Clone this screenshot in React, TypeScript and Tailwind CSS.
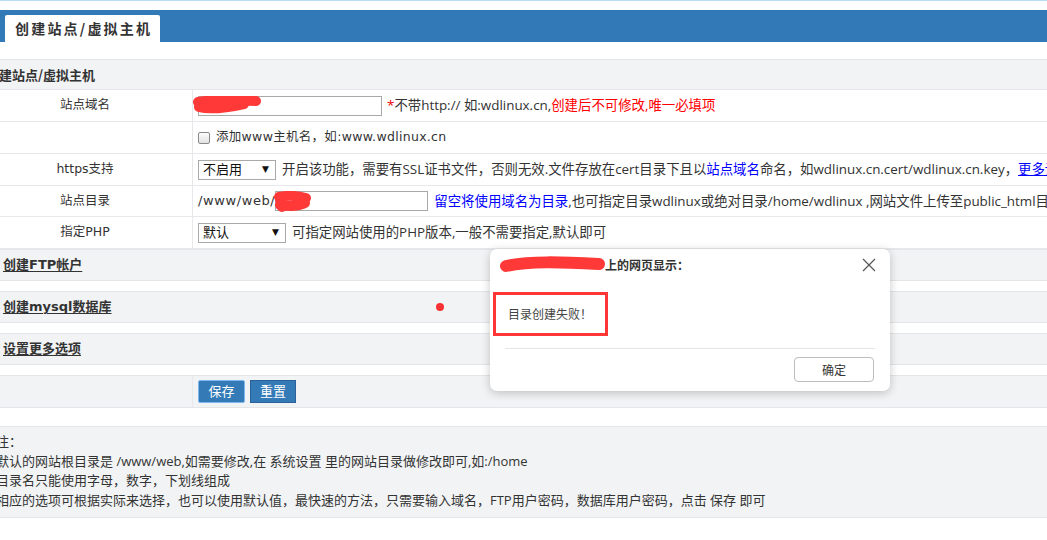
import React from 'react';

const formFont = "font-['DejaVu_Sans','Noto_Sans_CJK_SC',sans-serif]";
const descFont = "font-['Open_Sans','Noto_Sans_CJK_SC',sans-serif]";

// red brush marks that hide the real domain
function Scribble({ w, h, paths, sw }: { w: number; h: number; paths: string[]; sw: number }) {
  return (
    <svg width={w} height={h} viewBox={`0 0 ${w} ${h}`} className="block">
      {paths.map((d, i) => (
        <path key={i} d={d} fill="none" stroke="#ff3838" strokeWidth={sw} strokeLinecap="round" strokeLinejoin="round" />
      ))}
    </svg>
  );
}

function FakeSelect({ width, value }: { width: string; value: string }) {
  return (
    <div className={`${width} h-[20px] border border-[#a9a9a9] bg-white flex items-center justify-between pl-[4px] pr-[6px] text-[13px] text-[#111]`}>
      <span>{value}</span>
      <span className="text-[9px] leading-none">▼</span>
    </div>
  );
}

function FormRow({ label, h = 'h-[32px]', children }: { label?: string; h?: string; children: React.ReactNode }) {
  return (
    <div className={`flex ${h} border-b border-[#e6e8eb]`}>
      <div className="w-[215px] shrink-0 border-r border-[#e6e8eb] flex items-center justify-center text-[12.5px] text-[#333]">
        {label}
      </div>
      <div className="flex items-center pl-[5px] whitespace-nowrap">{children}</div>
    </div>
  );
}

function SectionRow({ title }: { title: string }) {
  return (
    <div className="h-[32px] bg-[#f2f3f5] border-y border-[#e3e5e8] flex items-center pl-[25px] mb-[10px]">
      <span className="text-[13px] font-bold text-[#333] underline underline-offset-2">{title}</span>
    </div>
  );
}

export default function App() {
  return (
    <div className={`relative w-[1047px] h-[540px] overflow-hidden bg-white ${formFont}`}>
      <div className="h-px bg-[#b9dcf5]" />
      <div className="mt-[9px] h-[32px] bg-[#3279b7] flex items-end pl-[5px]">
        <div className="h-[27px] w-[155px] bg-white rounded-t-[2px] flex items-center pl-[10px] font-['Noto_Sans_CJK_SC',sans-serif] text-[14px] font-bold tracking-[2.2px] text-[#333]">
          创建站点/虚拟主机
        </div>
      </div>

      <div className="mt-[17px] -ml-[22px] w-[1200px]">
        <div className="h-[31px] bg-[#f2f3f5] border-y border-[#e3e5e8] flex items-center pl-[8px]">
          <span className="text-[13px] font-bold text-[#333] font-['Noto_Sans_CJK_SC',sans-serif]">创建站点/虚拟主机</span>
        </div>

        <FormRow label="站点域名">
          <div className="relative w-[184px] h-[20px] border border-[#a9a9a9] bg-white">
            <div className="absolute -left-[7px] -top-[1px]">
              <Scribble w={72} h={20} sw={10} paths={['M6 6 C 22 3, 44 4, 64 5', 'M7 11 C 18 14, 34 12, 52 8']} />
            </div>
          </div>
          <span className={`ml-[5px] text-[13.4px] text-[#333] ${descFont}`}>
            <span className="text-[#e00]">*</span>不带http:// 如:wdlinux.cn,<span className="text-[#f00]">创建后不可修改,唯一必填项</span>
          </span>
        </FormRow>

        <FormRow>
          <div className="w-[12px] h-[12px] rounded-[2px] border border-[#8a8a8a] bg-[linear-gradient(#fdfdfd,#e2e2e2)]" />
          <span className="ml-[6px] text-[12.5px] tracking-[0.3px] text-[#333]">添加www主机名，如:www.wdlinux.cn</span>
        </FormRow>

        <FormRow label="https支持">
          <FakeSelect width="w-[78px]" value="不启用" />
          <span className={`ml-[6px] text-[13.4px] text-[#333] ${descFont}`}>
            开启该功能，需要有SSL证书文件，否则无效.文件存放在cert目录下且以<span className="text-[#0000ff]">站点域名</span>命名，如wdlinux.cn.cert/wdlinux.cn.key，<span className="text-[#0000ff] underline">更多设置</span>
          </span>
        </FormRow>

        <FormRow label="站点目录" h="h-[31px]">
          <span className="text-[13px] tracking-[0.6px] text-[#333]">/www/web/</span>
          <div className="relative w-[153px] h-[20px] border border-[#a9a9a9] bg-white">
            <div className="absolute -left-[2px] -top-[1px]">
              <Scribble w={38} h={22} sw={10} paths={['M5 6 C 14 4, 24 5, 32 7', 'M6 14 C 16 16, 26 15, 31 12', 'M6 8 L 8 16']} />
            </div>
          </div>
          <span className={`ml-[6px] text-[13.4px] text-[#333] ${descFont}`}>
            <span className="text-[#0000ff]">留空将使用域名为目录</span>,也可指定目录wdlinux或绝对目录/home/wdlinux ,网站文件上传至public_html目录
          </span>
        </FormRow>

        <FormRow label="指定PHP">
          <FakeSelect width="w-[88px]" value="默认" />
          <span className={`ml-[6px] text-[13.4px] text-[#333] ${descFont}`}>可指定网站使用的PHP版本,一般不需要指定,默认即可</span>
        </FormRow>

        <SectionRow title="创建FTP帐户" />
        <SectionRow title="创建mysql数据库" />
        <SectionRow title="设置更多选项" />

        <div className="flex h-[33px] bg-[#f2f3f5] border-y border-[#e3e5e8]">
          <div className="w-[215px] shrink-0 border-r border-[#e6e8eb]" />
          <div className={`flex items-center pl-[5px] gap-[5px] ${descFont}`}>
            <button className="w-[47px] h-[23px] bg-[#337ab7] border border-[#7fb6ee] rounded-[2px] text-white text-[13px] leading-none">保存</button>
            <button className="w-[46px] h-[23px] bg-[#337ab7] border border-[#2a6298] text-white text-[13px] leading-none">重置</button>
          </div>
        </div>

        <div className={`mt-[18px] bg-[#f2f3f5] border-y border-[#e3e5e8] pl-[18px] pt-[5px] pb-[7px] text-[13px] leading-[19.5px] text-[#333] ${descFont}`}>
          <div>注：</div>
          <div>默认的网站根目录是 /www/web,如需要修改,在 系统设置 里的网站目录做修改即可,如:/home</div>
          <div>目录名只能使用字母，数字，下划线组成</div>
          <div>相应的选项可根据实际来选择，也可以使用默认值，最快速的方法，只需要输入域名，FTP用户密码，数据库用户密码，点击 保存 即可</div>
        </div>
      </div>

      <div className="absolute left-[436px] top-[303px] w-[8px] h-[8px] rounded-full bg-[#f53232]" />

      <div className="absolute left-[490px] top-[249px] w-[400px] h-[142px] bg-white rounded-[7px] shadow-[0_2px_10px_rgba(0,0,0,0.22)] font-['Noto_Sans_CJK_SC',sans-serif]">
        <div className="flex items-center pl-[10px] pt-[7px] h-[24px]">
          <Scribble w={106} h={17} sw={12} paths={['M6 10 C 30 5, 60 6, 99 8']} />
          <span className="-ml-[1px] text-[12px] font-bold text-[#333]">上的网页显示：</span>
          <svg width="14" height="14" viewBox="0 0 14 14" className="ml-auto mr-[14px]">
            <path d="M1 1 L13 13 M13 1 L1 13" stroke="#555" strokeWidth="1.2" fill="none" />
          </svg>
        </div>
        <div className="ml-[3px] mt-[19px] w-[115px] h-[44px] border-[3px] border-[#ff3636] flex items-center pl-[12px] text-[12px] text-[#444]">
          目录创建失败！
        </div>
        <div className="mx-[15px] mt-[12px] h-px bg-[#e5e5e5]" />
        <div className="flex justify-end pr-[16px] mt-[8px]">
          <button className="w-[80px] h-[25px] border border-[#bdbdbd] rounded-[4px] bg-white text-[12px] text-[#333]">确定</button>
        </div>
      </div>
    </div>
  );
}
